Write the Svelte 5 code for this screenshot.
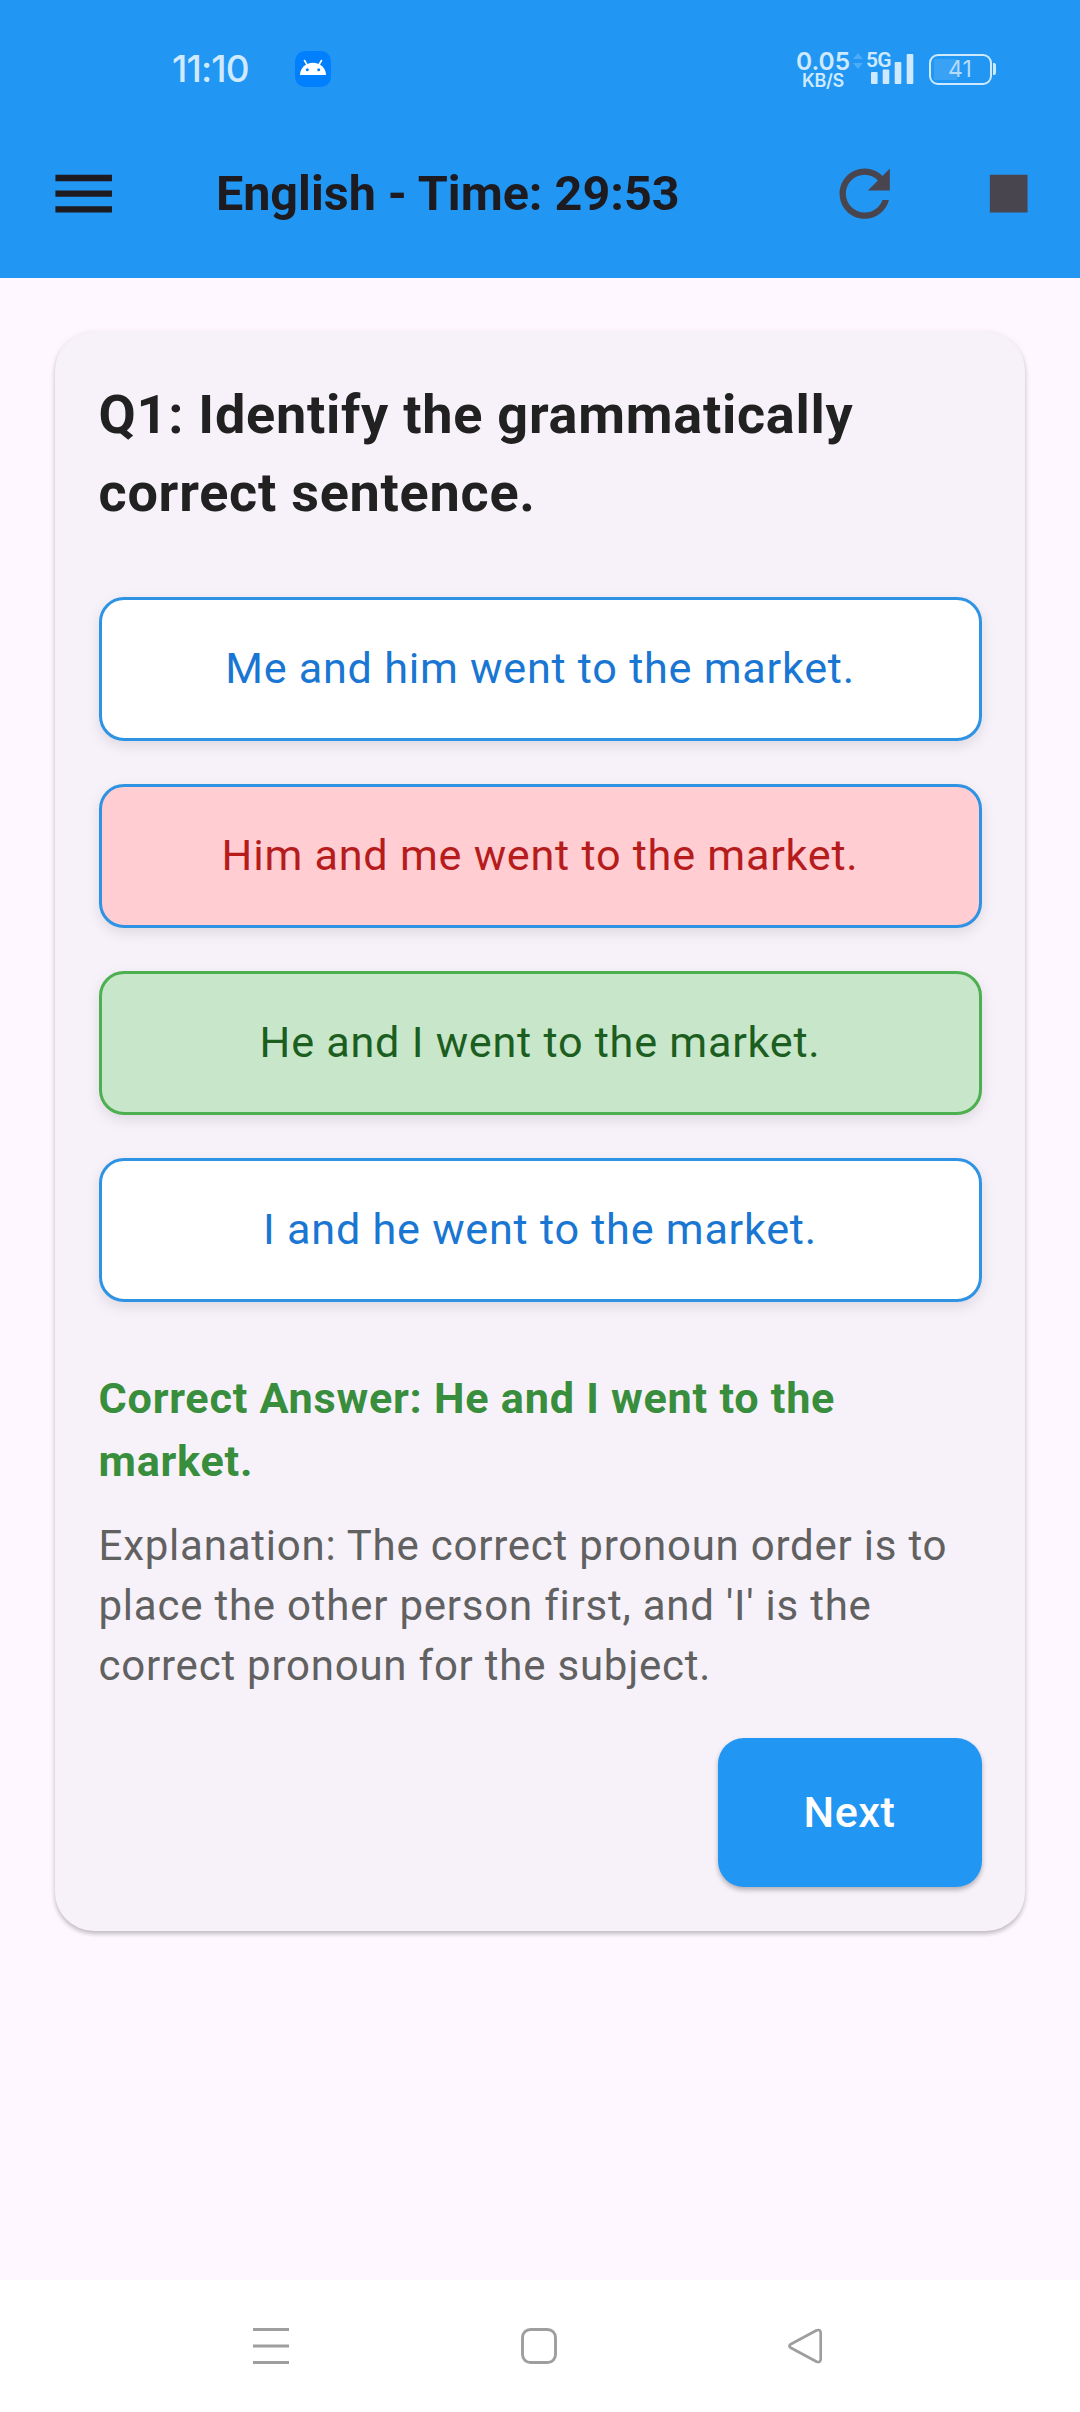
<script>
  const options = [
    { text: 'Me and him went to the market.', state: '' },
    { text: 'Him and me went to the market.', state: 'wrong' },
    { text: 'He and I went to the market.', state: 'right' },
    { text: 'I and he went to the market.', state: '' }
  ];
</script>

<div class="screen">
  <header>
    <div class="status">
      <span class="clock">11:10</span>
      <svg class="droid" width="36" height="36" viewBox="0 0 36 36">
        <rect width="36" height="36" rx="10" fill="#007fff" />
        <path d="M5 24a13 12.2 0 0 1 26 0z" fill="#fff" />
        <path d="M9.5 9.5l3 5M26.5 9.5l-3 5" stroke="#fff" stroke-width="1.6" stroke-linecap="round" />
        <circle cx="12.3" cy="18.8" r="1.5" fill="#007fff" />
        <circle cx="23.7" cy="18.8" r="1.5" fill="#007fff" />
      </svg>
      <div class="speed"><span class="rate">0.05</span><span class="unit">KB/S</span></div>
      <svg class="arrows" width="10" height="16" viewBox="0 0 10 16" fill="#4dacf7">
        <path d="M5 0l5 6H0zM5 16l5-6H0z" />
      </svg>
      <div class="signal">
        <span class="net">5G</span>
        <svg width="43" height="30" viewBox="0 0 43 30" fill="#cfeaff">
          <rect x="0" y="18" width="6.6" height="12" rx="1" />
          <rect x="11.7" y="15.5" width="6.6" height="14.5" rx="1" />
          <rect x="23.7" y="8" width="6.6" height="22" rx="1" />
          <rect x="35.7" y="0" width="6.6" height="30" rx="1" />
        </svg>
      </div>
      <div class="battery"><span>41</span></div>
      <i class="nub"></i>
    </div>
    <div class="bar">
      <svg class="menu" viewBox="0 0 24 24" fill="#1d1b20"><path d="M3 18h18v-2H3v2zm0-5h18v-2H3v2zm0-7v2h18V6H3z" /></svg>
      <h1>English - Time: 29:53</h1>
      <svg class="refresh" viewBox="0 0 24 24" fill="#49454f"><path d="M17.65 6.35C16.2 4.9 14.21 4 12 4c-4.42 0-7.99 3.58-7.99 8s3.57 8 7.99 8c3.73 0 6.84-2.55 7.73-6h-2.08c-.82 2.33-3.04 4-5.65 4-3.31 0-6-2.69-6-6s2.69-6 6-6c1.66 0 3.14.69 4.22 1.78L13 11h7V4l-2.35 2.35z" /></svg>
      <svg class="stop" viewBox="0 0 24 24" fill="#49454f"><path d="M6 6h12v12H6z" /></svg>
    </div>
  </header>

  <main>
    <section class="card">
      <h2>Q1: Identify the grammatically<br />correct sentence.</h2>
      <div class="options">
        {#each options as option}
          <div class="option {option.state}">{option.text}</div>
        {/each}
      </div>
      <p class="answer">Correct Answer: He and I went to the<br />market.</p>
      <p class="explain">Explanation: The correct pronoun order is to<br />place the other person first, and 'I' is the<br />correct pronoun for the subject.</p>
      <button>Next</button>
    </section>
  </main>

  <nav>
    <svg width="36" height="36" viewBox="0 0 36 36" fill="#9e9e9e">
      <path d="M0 0h36v3H0zM0 16.5h36v3H0zM0 33h36v3H0z" />
    </svg>
    <svg width="36" height="36" viewBox="0 0 36 36" fill="none" stroke="#9e9e9e" stroke-width="2.9">
      <rect x="1.5" y="1.5" width="33" height="33" rx="8" />
    </svg>
    <svg width="36" height="36" viewBox="0 0 36 36" fill="none" stroke="#9e9e9e" stroke-width="2.7" stroke-linejoin="round">
      <path d="M27.7 2.3L1.7 16.2q-2.6 1.8 0 3.6L27.7 33.7q4 1.3 4-2.6V4.9q0-3.9-4-2.6z" />
    </svg>
  </nav>
</div>

<style>
  :global(body) { background: #fef7ff; }
  .screen {
    width: 1080px;
    height: 2412px;
    display: flex;
    flex-direction: column;
    background: #fef7ff;
    font-family: Roboto, sans-serif;
    overflow: hidden;
  }
  h1, h2, p { margin: 0; }
  svg { flex: none; display: block; overflow: visible; }

  header { height: 278px; background: #2196f3; flex: none; }
  .status {
    height: 124px;
    box-sizing: border-box;
    padding: 14px 0 0 172px;
    display: flex;
    align-items: center;
    color: #cfeaff;
  }
  .clock { width: 123px; font: 500 37px/40px Inter, sans-serif; letter-spacing: -0.9px; }
  .speed {
    width: 56px;
    margin-left: 464px;
    padding-top: 3px;
    display: flex;
    flex-direction: column;
    align-items: center;
    font-family: Inter, sans-serif;
    font-weight: 600;
  }
  .rate { font-size: 24.5px; line-height: 20px; }
  .unit { font-size: 18px; line-height: 18px; letter-spacing: -0.3px; margin-top: 1px; }
  .arrows { margin: 0 3px 17px 2px; }
  .signal { position: relative; padding: 0 14.5px 0 5px; }
  .net {
    position: absolute;
    left: 0;
    top: -4px;
    font: 600 21px/20px Roboto, sans-serif;
    letter-spacing: -0.7px;
    background: #2196f3;
    padding-right: 1px;
    height: 17px;
  }
  .battery {
    box-sizing: border-box;
    width: 63px;
    height: 31px;
    border: 2.5px solid #cfeaff;
    border-radius: 9px;
    padding: 3px;
    background: linear-gradient(#3aa2f5, #3aa2f5) 3px 3px / 23px 21px no-repeat;
    text-align: center;
    font: 400 23px/20px Inter, sans-serif;
    color: #b4dcfb;
  }
  .nub { width: 3px; height: 12px; margin-left: 1px; background: #cfeaff; border-radius: 0 2px 2px 0; }

  .bar {
    height: 154px;
    box-sizing: border-box;
    padding: 0 34px 14px 46px;
    display: flex;
    align-items: center;
  }
  .bar svg { width: 75.4px; height: 75.4px; }
  h1 {
    flex: 1;
    padding-left: 94.5px;
    color: #1d1b20;
    font-size: 48.5px;
    line-height: 60px;
    font-weight: 700;
    white-space: nowrap;
  }
  .bar .stop { margin-left: 68.6px; }

  main { flex: 1; padding: 54px 55px; }
  .card {
    height: 1599px;
    box-sizing: border-box;
    padding: 44px 43.5px 43px;
    border-radius: 39px;
    background: #f7f2fa;
    box-shadow: 0 3px 4px rgba(0, 0, 0, 0.2), 0 1px 7px rgba(0, 0, 0, 0.08);
    display: flex;
    flex-direction: column;
  }
  h2 {
    color: #212121;
    font-size: 54px;
    line-height: 78px;
    font-weight: 700;
    letter-spacing: 0.75px;
  }
  .options { display: flex; flex-direction: column; gap: 43px; margin-top: 65px; }
  .option {
    box-sizing: border-box;
    height: 144px;
    border: 3px solid #2f93e3;
    border-radius: 25px;
    background: #fff;
    color: #1976d2;
    font-size: 43.2px;
    line-height: 138px;
    text-align: center;
    letter-spacing: 0.75px;
    box-shadow: 0 5px 14px rgba(0, 0, 0, 0.1);
  }
  .wrong { background: #ffcdd2; color: #b71c1c; }
  .right { background: #c8e6c9; color: #1b5e20; border-color: #4caf50; }
  .answer {
    margin-top: 65px;
    color: #388e3c;
    font-size: 43.2px;
    line-height: 63px;
    font-weight: 700;
    letter-spacing: 0.75px;
  }
  .explain {
    margin-top: 23px;
    color: #616161;
    font-size: 42px;
    line-height: 60px;
    letter-spacing: 0.77px;
  }
  button {
    align-self: flex-end;
    width: 264px;
    height: 149px;
    margin-top: 42px;
    padding: 0;
    border: 0;
    border-radius: 26px;
    background: #2196f3;
    color: #fff;
    font: 500 43.2px/149px Roboto, sans-serif;
    letter-spacing: 0.5px;
    box-shadow: 0 3px 5px rgba(0, 0, 0, 0.28);
  }

  nav {
    height: 132px;
    flex: none;
    box-sizing: border-box;
    padding: 0 255px 0 253px;
    display: flex;
    align-items: center;
    justify-content: space-between;
    background: #fff;
  }
</style>
